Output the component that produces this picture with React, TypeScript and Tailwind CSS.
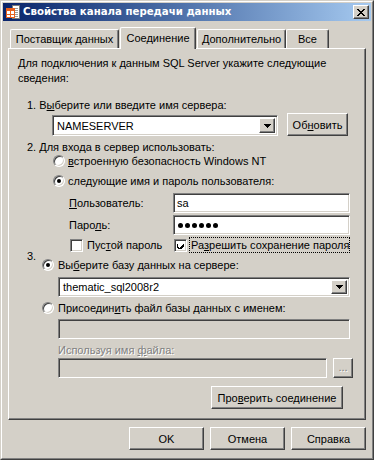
import type { ReactNode } from "react"

const raised =
  "border border-t-white border-l-white border-r-[#404040] border-b-[#404040] shadow-[inset_-1px_-1px_0_#808080]"
const sunken =
  "border border-t-[#808080] border-l-[#808080] border-r-white border-b-white shadow-[inset_1px_1px_0_#404040,inset_-1px_-1px_0_#d4d0c8]"

const Radio = ({ checked }: { checked?: boolean }) => (
  <span className={`${sunken} w-[12px] h-[12px] rounded-full bg-white flex items-center justify-center shrink-0`}>
    {checked && <span className="w-[4px] h-[4px] rounded-full bg-black" />}
  </span>
)

const Checkbox = ({ checked }: { checked?: boolean }) => (
  <span className={`${sunken} w-[13px] h-[13px] bg-white flex items-center justify-center shrink-0`}>
    {checked && (
      <svg width="7" height="7" viewBox="0 0 7 7" shapeRendering="crispEdges">
        <path d="M0 2h1v3h1v1h1v-1h1v-1h1v-1h1v-1h1v3h-1v1h-1v1h-1v1h-2v-1h-1v-1h-1z" fill="#000" />
      </svg>
    )}
  </span>
)

const Arrow = () => (
  <svg width="7" height="4" viewBox="0 0 7 4" shapeRendering="crispEdges">
    <path d="M0 0h7v1h-1v1h-1v1h-1v1h-1v-1h-1v-1h-1v-1h-1z" fill="#000" />
  </svg>
)

const Combo = ({ value, className }: { value: string; className: string }) => (
  <div className={`${sunken} ${className} bg-white flex items-stretch p-[2px]`}>
    <span className="flex-1 pl-[2px] flex items-center">{value}</span>
    <span className={`${raised} w-[16px] bg-[#d4d0c8] flex items-center justify-center`}>
      <Arrow />
    </span>
  </div>
)

const Button = ({ children, className }: { children: ReactNode; className: string }) => (
  <div className={`${raised} ${className} bg-[#d4d0c8] flex items-center justify-center`}>
    <span>{children}</span>
  </div>
)

const TitleIcon = () => (
  <svg width="16" height="16" viewBox="0 0 16 16" shapeRendering="crispEdges">
    <rect x="7.5" y="1.5" width="7" height="13" fill="#fff" stroke="#7a7a7a" />
    <path d="M9 4h4M9 6h4M9 8h4M9 10h4M9 12h4" stroke="#9a9a9a" />
    <rect x="1" y="4" width="9" height="10" fill="#fff" />
    <rect x="1" y="4" width="9" height="3" fill="#e8601c" />
    <path d="M1.5 4v10M9.5 4v10M1 13.5h9M1 10.5h9M5.5 7v7" stroke="#e8601c" />
  </svg>
)

const tab =
  "h-[19px] bg-[#d4d0c8] border-t border-l border-r border-t-white border-l-white border-r-[#404040] shadow-[inset_-1px_0_0_#808080] rounded-t-[2px] flex items-center justify-center"

export default function App() {
  return (
    <div className="w-[374px] h-[460px] bg-[#d4d0c8] border border-t-[#d4d0c8] border-l-[#d4d0c8] border-r-[#404040] border-b-[#404040] font-['Liberation_Sans',Arial,sans-serif] text-[11px] text-black leading-[14px] whitespace-nowrap">
      <div className="h-full border border-t-white border-l-white border-r-[#808080] border-b-[#808080] p-px flex flex-col">
        <div className="h-[18px] flex items-center bg-gradient-to-r from-[#0a246a] to-[#a6caf0] pl-[2px] pr-[2px]">
          <TitleIcon />
          <span className="ml-[2px] text-white font-bold text-[10.2px] font-['DejaVu_Sans',sans-serif]">
            Свойства канала передачи данных
          </span>
          <div className={`${raised} ml-auto w-[16px] h-[14px] bg-[#d4d0c8] flex items-center justify-center`}>
            <svg width="8" height="7" viewBox="0 0 8 7" shapeRendering="crispEdges">
              <path d="M0 0h2v1h1v1h2v-1h1v-1h2v1h-1v1h-1v1h-1v1h1v1h1v1h1v1h-2v-1h-1v-1h-2v1h-1v1h-2v-1h1v-1h1v-1h1v-1h-1v-1h-1v-1h-1z" fill="#000" />
            </svg>
          </div>
        </div>

        <div className="px-[5px] pt-[6px] flex flex-col">
          <div className="h-[21px] flex items-end">
            <div className={`${tab} ml-[2px] w-[109px]`}>Поставщик данных</div>
            <div className="relative z-10 ml-px w-[76px] h-[22px] -mb-px bg-[#d4d0c8] border-t border-l border-r border-t-white border-l-white border-r-[#404040] shadow-[inset_-1px_0_0_#808080] rounded-t-[2px] flex items-start pt-[3px] justify-center">
              Соединение
            </div>
            <div className={`${tab} ml-px w-[89px]`}>Дополнительно</div>
            <div className={`${tab} w-[43px]`}>Все</div>
          </div>

          <div className="h-[372px] border border-t-white border-l-white border-r-[#404040] border-b-[#404040] shadow-[inset_-1px_-1px_0_#808080] flex flex-col">
            <p className="mt-[7px] ml-[9px] leading-[15px]">
              Для подключения к данным SQL Server укажите следующие
              <br />
              сведения:
            </p>

            <p className="mt-[12px] ml-[18px] h-[14px]">
              1. В<u>ы</u>берите или введите имя сервера:
            </p>
            <div className="mt-px h-[23px] flex">
              <Combo value="NAMESERVER" className="ml-[43px] mt-[2px] w-[226px] h-[21px]" />
              <Button className="ml-[9px] w-[61px] h-[23px]">
                Об<u>н</u>овить
              </Button>
            </div>

            <p className="mt-[4px] ml-[18px] h-[14px]">2. Для входа в сервер использовать:</p>
            <div className="h-[14px] flex items-center ml-[44px]">
              <Radio />
              <span className="ml-[3px]">
                <u>в</u>строенную безопасность Windows NT
              </span>
            </div>
            <div className="mt-[6px] h-[14px] flex items-center ml-[44px]">
              <Radio checked />
              <span className="ml-[3px]">
                сле<u>д</u>ующие имя и пароль пользователя:
              </span>
            </div>

            <div className="mt-[5px] h-[20px] flex items-center ml-[60px]">
              <span className="w-[104px]">
                <u>П</u>ользователь:
              </span>
              <div className={`${sunken} w-[177px] h-[20px] bg-white pl-[3px] flex items-center`}>sa</div>
            </div>
            <div className="mt-[2px] h-[20px] flex items-center ml-[60px]">
              <span className="w-[104px]">
                Паро<u>л</u>ь:
              </span>
              <div className={`${sunken} w-[177px] h-[20px] bg-white pl-[4px] flex items-center gap-[2px]`}>
                {[0, 1, 2, 3, 4, 5].map((i) => (
                  <span key={i} className="w-[5px] h-[5px] rounded-full bg-black" />
                ))}
              </div>
            </div>

            <div className="mt-[2px] h-[16px] flex items-center ml-[61px]">
              <div className="w-[104px] flex items-center">
                <Checkbox />
                <span className="ml-[4px]">
                  Пус<u>т</u>ой пароль
                </span>
              </div>
              <Checkbox checked />
              <div className="ml-[2px] w-[161px] h-[16px] pl-px border border-dotted border-black flex items-center overflow-hidden">
                <span>
                  Ра<u>з</u>решить сохранение пароля
                </span>
              </div>
            </div>

            <p className="-mt-[4px] ml-[18px] h-[14px]">3.</p>
            <div className="-mt-[5px] h-[14px] flex items-center ml-[33px]">
              <Radio checked />
              <span className="ml-[4px]">
                Вы<u>б</u>ерите базу данных на сервере:
              </span>
            </div>
            <Combo value="thematic_sql2008r2" className="mt-[5px] ml-[49px] w-[292px] h-[20px]" />

            <div className="mt-[4px] h-[14px] flex items-center ml-[33px]">
              <Radio />
              <span className="ml-[4px]">
                Присоедин<u>и</u>ть файл базы данных с именем:
              </span>
            </div>
            <div className={`${sunken} mt-[4px] ml-[49px] w-[292px] h-[20px] bg-[#d4d0c8]`} />

            <p className="mt-[4px] ml-[49px] h-[14px] text-[#808080] [text-shadow:1px_1px_0_#fff]">
              Используя имя <u>ф</u>айла:
            </p>
            <div className="mt-px h-[20px] flex ml-[49px]">
              <div className={`${sunken} w-[269px] h-[20px] bg-[#d4d0c8]`} />
              <Button className="ml-[6px] w-[20px] h-[20px] text-[#808080] [text-shadow:1px_1px_0_#fff] pb-[2px]">
                ...
              </Button>
            </div>

            <Button className="mt-[8px] ml-[202px] w-[132px] h-[23px]">
              Про<u>в</u>ерить соединение
            </Button>
          </div>

          <div className="mt-[7px] h-[23px] flex justify-end gap-[6px]">
            <Button className="w-[75px] h-[23px]">OK</Button>
            <Button className="w-[75px] h-[23px]">Отмена</Button>
            <Button className="w-[75px] h-[23px]">Справка</Button>
          </div>
        </div>
      </div>
    </div>
  )
}
